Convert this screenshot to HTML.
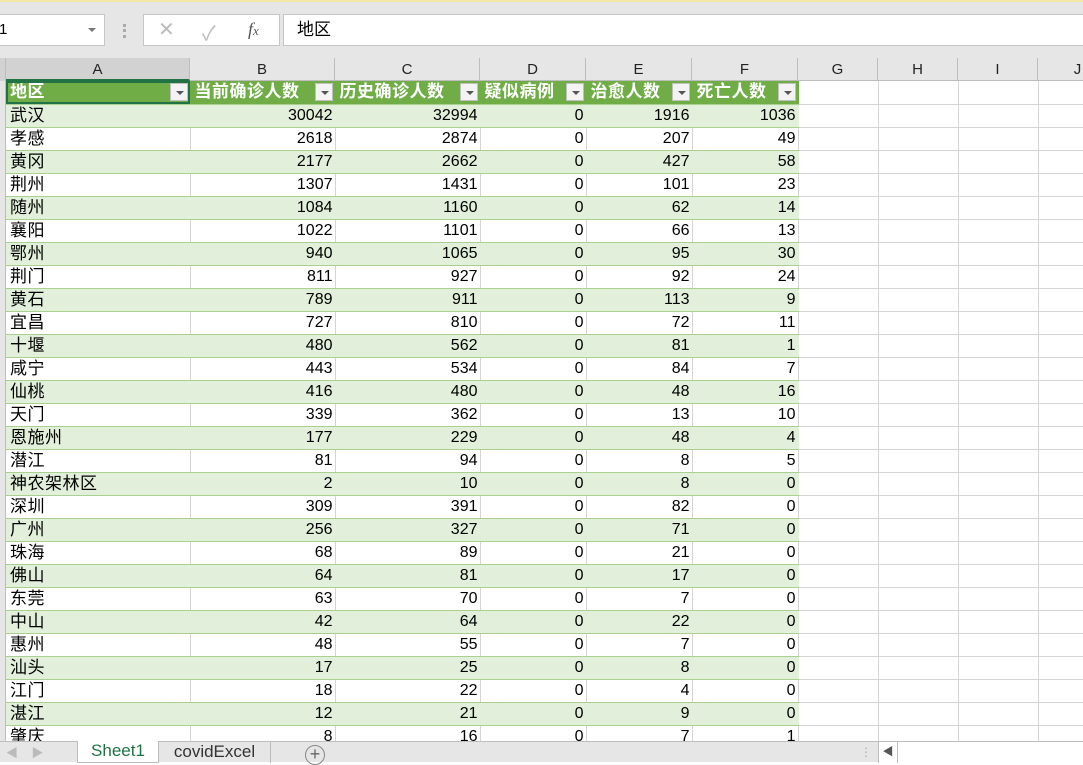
<!DOCTYPE html>
<html><head><meta charset="utf-8"><style>
*{margin:0;padding:0;box-sizing:border-box}
body{width:1083px;height:762px;overflow:hidden;background:#fff;font-family:"Liberation Sans","Noto Sans CJK SC",sans-serif;position:relative}
.top{position:absolute;left:0;top:0;width:1083px;height:58px;background:#e6e6e6;border-top:2px solid #f3e9a6}
.box{position:absolute;background:#fff;border:1px solid #c6c6c6}
.colh{position:absolute;top:58px;left:0;height:23px;width:1083px;background:#e6e6e6;border-bottom:1px solid #bdbdbd}
.colh div{position:absolute;top:0;height:23px;border-right:1px solid #bdbdbd;text-align:center;font-size:15px;line-height:23px;color:#222}
table{position:absolute;left:6px;top:81px;border-collapse:collapse;table-layout:fixed;font-size:16px;width:1092px}
td{height:23px;padding:0 2px 0 4px;white-space:nowrap;overflow:hidden;line-height:22px;color:#000}
td.n{text-align:right}
td.c{font-size:17px;letter-spacing:0.5px}
tr.g td.t{background:#e2efda;border-right:1px solid #e2efda}
tr.w td.t{background:#fff;border-right:1px solid #d4d4d4}
td.t{border-bottom:1px solid #a9d08e}
td.e{border-right:1px solid #d4d4d4;border-bottom:1px solid #d4d4d4}
tr.h td.t{background:#70ad47;color:#fff;border-right:1px solid #70ad47;position:relative;font-size:17px;font-weight:bold;letter-spacing:0.5px}
.dd{position:absolute;right:2px;top:2px;width:18px;height:18px;background:#f3f3f3;border:1px solid #c0c0c0}
.dd:after{content:"";position:absolute;left:5px;top:7px;border-left:4px solid transparent;border-right:4px solid transparent;border-top:4px solid #555}
.tabs{position:absolute;left:0;top:741px;width:1083px;height:21px;background:#e6e6e6;border-top:1px solid #bdbdbd;font-size:16px}
</style></head><body>
<div class="top">
 <div class="box" style="left:-2px;top:12px;width:107px;height:32px;font-size:15px;line-height:30px;padding-left:0">1<span style="position:absolute;right:8px;top:13px;border-left:4px solid transparent;border-right:4px solid transparent;border-top:4px solid #777"></span></div>
 <div style="position:absolute;left:123px;top:22px;width:3px;height:14px;border-left:3px dotted #aaa"></div>
 <div class="box" style="left:143px;top:12px;width:137px;height:32px;color:#bbb;font-size:20px">
  <span style="position:absolute;left:14px;top:2px">✕</span><span style="position:absolute;left:58px;top:2px">✓</span>
  <span style="position:absolute;left:104px;top:4px;color:#555;font-family:'Liberation Serif',serif;font-style:italic;font-size:18px">f<span style="font-size:13px">x</span></span></div>
 <div class="box" style="left:283px;top:12px;width:810px;height:32px;font-size:17px;line-height:30px;padding-left:13px">地区</div>
</div>
<div class="colh">
 <div style="left:0;width:6px;background:#d2d2d2"></div>
 <div style="left:6px;width:184px;background:#d2d2d2;border-bottom:2px solid #217346">A</div>
 <div style="left:190px;width:145px">B</div><div style="left:335px;width:145px">C</div>
 <div style="left:480px;width:106px">D</div><div style="left:586px;width:106px">E</div>
 <div style="left:692px;width:106px">F</div><div style="left:798px;width:80px">G</div>
 <div style="left:878px;width:80px">H</div><div style="left:958px;width:80px">I</div>
 <div style="left:1038px;width:80px">J</div>
</div>
<table>
<colgroup><col style="width:184px"><col style="width:145px"><col style="width:145px"><col style="width:106px"><col style="width:106px"><col style="width:106px"><col style="width:80px"><col style="width:80px"><col style="width:80px"><col style="width:60px"></colgroup>
<tr class="h"><td class="t" style="outline:2px solid #217346;outline-offset:-2px">地区<span class="dd"></span></td><td class="t">当前确诊人数<span class="dd"></span></td><td class="t">历史确诊人数<span class="dd"></span></td><td class="t">疑似病例<span class="dd"></span></td><td class="t">治愈人数<span class="dd"></span></td><td class="t">死亡人数<span class="dd"></span></td><td class="e"></td><td class="e"></td><td class="e"></td><td class="e"></td></tr>
<tr class="g"><td class="t c">武汉</td><td class="t n">30042</td><td class="t n">32994</td><td class="t n">0</td><td class="t n">1916</td><td class="t n">1036</td><td class="e"></td><td class="e"></td><td class="e"></td><td class="e"></td></tr>
<tr class="w"><td class="t c">孝感</td><td class="t n">2618</td><td class="t n">2874</td><td class="t n">0</td><td class="t n">207</td><td class="t n">49</td><td class="e"></td><td class="e"></td><td class="e"></td><td class="e"></td></tr>
<tr class="g"><td class="t c">黄冈</td><td class="t n">2177</td><td class="t n">2662</td><td class="t n">0</td><td class="t n">427</td><td class="t n">58</td><td class="e"></td><td class="e"></td><td class="e"></td><td class="e"></td></tr>
<tr class="w"><td class="t c">荆州</td><td class="t n">1307</td><td class="t n">1431</td><td class="t n">0</td><td class="t n">101</td><td class="t n">23</td><td class="e"></td><td class="e"></td><td class="e"></td><td class="e"></td></tr>
<tr class="g"><td class="t c">随州</td><td class="t n">1084</td><td class="t n">1160</td><td class="t n">0</td><td class="t n">62</td><td class="t n">14</td><td class="e"></td><td class="e"></td><td class="e"></td><td class="e"></td></tr>
<tr class="w"><td class="t c">襄阳</td><td class="t n">1022</td><td class="t n">1101</td><td class="t n">0</td><td class="t n">66</td><td class="t n">13</td><td class="e"></td><td class="e"></td><td class="e"></td><td class="e"></td></tr>
<tr class="g"><td class="t c">鄂州</td><td class="t n">940</td><td class="t n">1065</td><td class="t n">0</td><td class="t n">95</td><td class="t n">30</td><td class="e"></td><td class="e"></td><td class="e"></td><td class="e"></td></tr>
<tr class="w"><td class="t c">荆门</td><td class="t n">811</td><td class="t n">927</td><td class="t n">0</td><td class="t n">92</td><td class="t n">24</td><td class="e"></td><td class="e"></td><td class="e"></td><td class="e"></td></tr>
<tr class="g"><td class="t c">黄石</td><td class="t n">789</td><td class="t n">911</td><td class="t n">0</td><td class="t n">113</td><td class="t n">9</td><td class="e"></td><td class="e"></td><td class="e"></td><td class="e"></td></tr>
<tr class="w"><td class="t c">宜昌</td><td class="t n">727</td><td class="t n">810</td><td class="t n">0</td><td class="t n">72</td><td class="t n">11</td><td class="e"></td><td class="e"></td><td class="e"></td><td class="e"></td></tr>
<tr class="g"><td class="t c">十堰</td><td class="t n">480</td><td class="t n">562</td><td class="t n">0</td><td class="t n">81</td><td class="t n">1</td><td class="e"></td><td class="e"></td><td class="e"></td><td class="e"></td></tr>
<tr class="w"><td class="t c">咸宁</td><td class="t n">443</td><td class="t n">534</td><td class="t n">0</td><td class="t n">84</td><td class="t n">7</td><td class="e"></td><td class="e"></td><td class="e"></td><td class="e"></td></tr>
<tr class="g"><td class="t c">仙桃</td><td class="t n">416</td><td class="t n">480</td><td class="t n">0</td><td class="t n">48</td><td class="t n">16</td><td class="e"></td><td class="e"></td><td class="e"></td><td class="e"></td></tr>
<tr class="w"><td class="t c">天门</td><td class="t n">339</td><td class="t n">362</td><td class="t n">0</td><td class="t n">13</td><td class="t n">10</td><td class="e"></td><td class="e"></td><td class="e"></td><td class="e"></td></tr>
<tr class="g"><td class="t c">恩施州</td><td class="t n">177</td><td class="t n">229</td><td class="t n">0</td><td class="t n">48</td><td class="t n">4</td><td class="e"></td><td class="e"></td><td class="e"></td><td class="e"></td></tr>
<tr class="w"><td class="t c">潜江</td><td class="t n">81</td><td class="t n">94</td><td class="t n">0</td><td class="t n">8</td><td class="t n">5</td><td class="e"></td><td class="e"></td><td class="e"></td><td class="e"></td></tr>
<tr class="g"><td class="t c">神农架林区</td><td class="t n">2</td><td class="t n">10</td><td class="t n">0</td><td class="t n">8</td><td class="t n">0</td><td class="e"></td><td class="e"></td><td class="e"></td><td class="e"></td></tr>
<tr class="w"><td class="t c">深圳</td><td class="t n">309</td><td class="t n">391</td><td class="t n">0</td><td class="t n">82</td><td class="t n">0</td><td class="e"></td><td class="e"></td><td class="e"></td><td class="e"></td></tr>
<tr class="g"><td class="t c">广州</td><td class="t n">256</td><td class="t n">327</td><td class="t n">0</td><td class="t n">71</td><td class="t n">0</td><td class="e"></td><td class="e"></td><td class="e"></td><td class="e"></td></tr>
<tr class="w"><td class="t c">珠海</td><td class="t n">68</td><td class="t n">89</td><td class="t n">0</td><td class="t n">21</td><td class="t n">0</td><td class="e"></td><td class="e"></td><td class="e"></td><td class="e"></td></tr>
<tr class="g"><td class="t c">佛山</td><td class="t n">64</td><td class="t n">81</td><td class="t n">0</td><td class="t n">17</td><td class="t n">0</td><td class="e"></td><td class="e"></td><td class="e"></td><td class="e"></td></tr>
<tr class="w"><td class="t c">东莞</td><td class="t n">63</td><td class="t n">70</td><td class="t n">0</td><td class="t n">7</td><td class="t n">0</td><td class="e"></td><td class="e"></td><td class="e"></td><td class="e"></td></tr>
<tr class="g"><td class="t c">中山</td><td class="t n">42</td><td class="t n">64</td><td class="t n">0</td><td class="t n">22</td><td class="t n">0</td><td class="e"></td><td class="e"></td><td class="e"></td><td class="e"></td></tr>
<tr class="w"><td class="t c">惠州</td><td class="t n">48</td><td class="t n">55</td><td class="t n">0</td><td class="t n">7</td><td class="t n">0</td><td class="e"></td><td class="e"></td><td class="e"></td><td class="e"></td></tr>
<tr class="g"><td class="t c">汕头</td><td class="t n">17</td><td class="t n">25</td><td class="t n">0</td><td class="t n">8</td><td class="t n">0</td><td class="e"></td><td class="e"></td><td class="e"></td><td class="e"></td></tr>
<tr class="w"><td class="t c">江门</td><td class="t n">18</td><td class="t n">22</td><td class="t n">0</td><td class="t n">4</td><td class="t n">0</td><td class="e"></td><td class="e"></td><td class="e"></td><td class="e"></td></tr>
<tr class="g"><td class="t c">湛江</td><td class="t n">12</td><td class="t n">21</td><td class="t n">0</td><td class="t n">9</td><td class="t n">0</td><td class="e"></td><td class="e"></td><td class="e"></td><td class="e"></td></tr>
<tr class="w"><td class="t c">肇庆</td><td class="t n">8</td><td class="t n">16</td><td class="t n">0</td><td class="t n">7</td><td class="t n">1</td><td class="e"></td><td class="e"></td><td class="e"></td><td class="e"></td></tr>
</table>
<div style="position:absolute;left:0;top:81px;width:6px;height:660px;background:#e6e6e6;border-right:1px solid #bdbdbd"></div>
<div class="tabs">
 <span style="position:absolute;left:6px;top:2px;color:#bbb;font-size:12px">◀&nbsp;&nbsp;&nbsp;&nbsp;▶</span>
 <div style="position:absolute;left:77px;top:-1px;width:82px;height:22px;background:#fff;border:1px solid #bdbdbd;border-top:none;color:#217346;text-align:center;line-height:20px;font-size:17px">Sheet1</div>
 <div style="position:absolute;left:159px;top:0;width:112px;height:21px;border-right:1px solid #bdbdbd;color:#333;text-align:center;line-height:20px;font-size:17px">covidExcel</div>
 <div style="position:absolute;left:305px;top:3px;width:20px;height:20px;border:1.5px solid #888;border-radius:50%;text-align:center;line-height:17px;color:#666;font-size:18px">+</div>
 <span style="position:absolute;left:860px;top:3px;color:#aaa;font-size:12px">⋮</span>
 <div style="position:absolute;left:878px;top:0;width:20px;height:21px;border-left:1px solid #bdbdbd;border-right:1px solid #bdbdbd;background:#fff;color:#555;font-size:11px;line-height:21px;text-align:center">◀</div>
 <div style="position:absolute;left:898px;top:0;width:185px;height:21px;background:#fff"></div>
</div>
</body></html>
